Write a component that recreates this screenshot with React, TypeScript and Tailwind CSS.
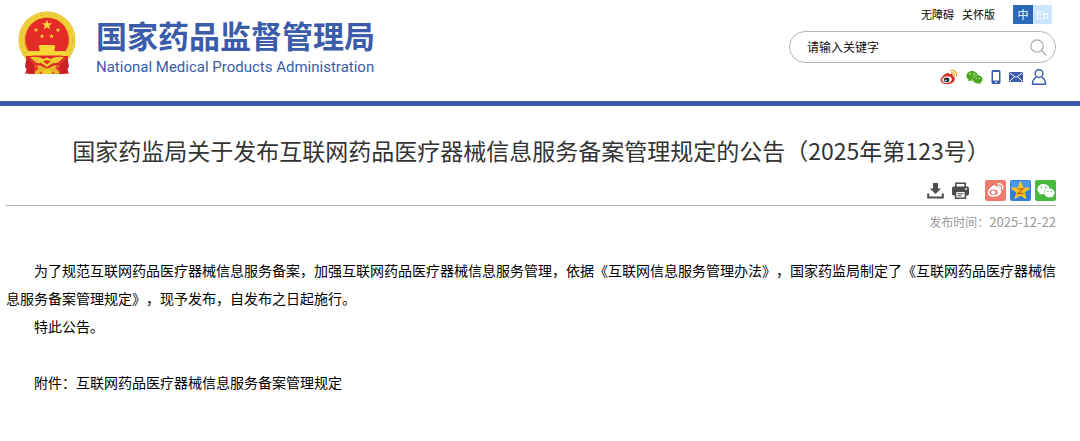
import React from 'react';
import { FaWeixin } from 'react-icons/fa';

const paragraphs = [
  '为了规范互联网药品医疗器械信息服务备案，加强互联网药品医疗器械信息服务管理，依据《互联网信息服务管理办法》，国家药监局制定了《互联网药品医疗器械信息服务备案管理规定》，现予发布，自发布之日起施行。',
  '特此公告。'
];

const star = (cx: number, cy: number, r: number) => Array.from({ length: 10 }, (_, i) => {
  const radius = i % 2 ? r * 0.4 : r;
  const angle = Math.PI * i / 5 - Math.PI / 2;
  return `${cx + radius * Math.cos(angle)},${cy + radius * Math.sin(angle)}`;
}).join(' ');

const Emblem = () => <svg viewBox="0 0 58 64" className="h-16 w-[58px] shrink-0" role="img" aria-label="国徽">
    <circle cx="29" cy="29" r="28.5" fill="#e6bd2c" />
    <circle cx="29" cy="29" r="25.5" fill="none" stroke="#f2d63a" strokeWidth="4" />
    <circle cx="29" cy="29" r="25.5" fill="none" stroke="#dfb42c" strokeWidth="1" strokeDasharray="5 2" />
    <circle cx="29" cy="28.5" r="21.8" fill="#e42b27" />
    <g fill="#f9d835">
      <polygon points={star(29, 14, 5.4)} />
      <polygon points={star(18, 19, 2.5)} />
      <polygon points={star(40, 19, 2.5)} />
      <polygon points={star(24, 25.2, 2.5)} />
      <polygon points={star(33.5, 25.2, 2.5)} />
      <path d="M21.500 34h15l1 2.500h-1V40H47l2 4.500H9l2-4.500h10.500v-3.500h-1z" />
    </g>
    <path d="M8 45h42l-2 18H10z" fill="#dc2927" />
    <path d="M12 46q9-1 13 2l4-1.500 4 1.500q4-3 13-2l-4 4q-3 3-7 2l-6 4-6-4q-4 1-7-2z" fill="#efcb2f" />
    <path d="M25.500 50.500q3.500-2.500 7 0l-3.500 3z" fill="#e42b27" />
    <path d="M16 55q6-2 9 1l4 1.500 4-1.500q3-3 9-1l-5 2.500q5 1 4 5.500h-4l-3-2.500h-10L21 63h-4q-1-4.500 4-5.500z" fill="#e6b92a" />
    <path d="M25 59h8l1.500 4h-11z" fill="#efcb2f" />
    <path d="M9 45l7 8-.5 10-3-1.500L7 63l1.500-4.500L7 55z" fill="#c92026" />
    <path d="M49 45l-7 8 .5 10 3-1.500L51 63l-1.500-4.500L51 55z" fill="#c92026" />
    <path d="M10 47l9 8-1 5M48 47l-9 8 1 5" fill="none" stroke="#ec3b30" strokeWidth="1.500" />
  </svg>;

const WeiboIcon = () => <svg viewBox="0 0 18 16" className="h-4 w-[18px]" aria-hidden="true">
    <path d="M7 4.200c1.300-.6 2.600-.4 2.300 1.300 1.600-.7 4-.6 3.500 1.400 4.100 1.400 2 8.300-5.800 8.300C3.400 15.200.6 13.300.7 11 .8 8.200 4.300 5.200 7 4.200z" fill="#d52b2a" />
    <ellipse cx="7" cy="10.600" rx="4.900" ry="3.300" fill="#fff" transform="rotate(-8 7 10.600)" />
    <ellipse cx="6.600" cy="10.800" rx="2.700" ry="2.300" fill="#222" />
    <circle cx="5.800" cy="11.300" r=".9" fill="#fff" />
    <path d="M11 1.500c3.500-.8 6.500 2 5.500 5.700M11.500 4c1.800-.3 3.200 1 2.700 2.800" fill="none" stroke="#eeaa2d" strokeWidth="1.400" strokeLinecap="round" />
  </svg>;

const PhoneIcon = () => <svg viewBox="0 0 10 14" className="h-3.5 w-2.5" aria-hidden="true">
    <path fillRule="evenodd" d="M2 0h6a1.500 1.500 0 0 1 1.500 1.500v11A1.500 1.500 0 0 1 8 14H2a1.500 1.500 0 0 1-1.500-1.500v-11A1.500 1.500 0 0 1 2 0zm0 2v8.500h6V2zm2.200 9.500v1.200h1.600v-1.200z" fill="#3a5cab" />
  </svg>;

const MailIcon = () => <svg viewBox="0 0 14 10" className="h-2.5 w-3.5" aria-hidden="true">
    <rect width="14" height="10" rx="1" fill="#3a5cab" />
    <path d="M.8 1l6.200 4.500L13.200 1M.8 9.200l4-4M13.200 9.200l-4-4" fill="none" stroke="#fff" strokeWidth="1" />
  </svg>;

const UserIcon = () => <svg viewBox="0 0 16 16" className="size-4" aria-hidden="true">
    <g fill="none" stroke="#3a5cab" strokeWidth="1.400" strokeLinejoin="round">
      <circle cx="8" cy="4.600" r="3.900" />
      <path d="M5.300 8.300C2.800 9.300 1.500 11.500 1.500 15.200h13c0-3.700-1.300-5.900-3.800-6.900" />
    </g>
  </svg>;

const DownloadIcon = () => <svg viewBox="0 0 17 17" className="size-[17px]" aria-hidden="true">
    <path d="M6 1h5v5.500h3.200L8.500 12 2.800 6.500H6z" fill="#4d4d4d" />
    <path d="M1.200 11.500v4h14.600v-4" fill="none" stroke="#4d4d4d" strokeWidth="2" />
  </svg>;

const PrintIcon = () => <svg viewBox="0 0 17 17" className="size-[17px]" aria-hidden="true">
    <path d="M3.800 5V1.200h9.400V5" fill="none" stroke="#4d4d4d" strokeWidth="1.600" />
    <rect y="4.500" width="17" height="9" rx="1.800" fill="#4d4d4d" />
    <circle cx="14" cy="7" r=".9" fill="#fff" />
    <rect x="3.600" y="9.300" width="9.800" height="6.900" fill="#fff" stroke="#4d4d4d" strokeWidth="1.500" />
    <path d="M5.500 11.700h6M5.500 13.800h4" stroke="#4d4d4d" strokeWidth="1.100" />
  </svg>;

const WeiboShareIcon = () => <svg viewBox="0 0 21 21" className="size-[21px]" aria-hidden="true">
    <rect width="21" height="21" rx="2" fill="#ee7b6e" />
    <path d="M8.500 5.500c1.600-.6 2.800-.2 2.500 1.500 1.900-.7 4-.4 3.500 1.700 3.700 1.600 1.600 8.100-5.900 8.100-3.600 0-6-1.700-5.900-4.100.1-2.500 3-6.100 5.800-7.200z" fill="#fff" />
    <ellipse cx="8.600" cy="12.300" rx="4.200" ry="2.900" fill="#ee7b6e" />
    <circle cx="8.200" cy="12.500" r="2.100" fill="#fff" />
    <path d="M13 3.800c3.200-.5 5.400 1.800 4.600 5.200M13.200 6.200c1.600-.2 2.500.9 2.100 2.500" fill="none" stroke="#fff" strokeWidth="1.300" strokeLinecap="round" />
  </svg>;

const QzoneIcon = () => <svg viewBox="0 0 21 21" className="size-[21px]" aria-hidden="true">
    <rect width="21" height="21" rx="2" fill="#2f7fdb" />
    <rect x="1" y="1" width="19" height="10" rx="1" fill="#4a98ea" />
    <polygon points={star(10.5, 11, 8.8)} fill="#fdc624" stroke="#fdc624" strokeWidth="1.500" strokeLinejoin="round" />
    <path d="M7.500 8.800h5.500l-5 4.700h5.500" fill="none" stroke="#c46b16" strokeWidth="1.300" />
  </svg>;

const linkClass = 'flex items-center';

const Header = () => <header className="flex items-start justify-between border-b-5 border-[#3a5cab] pr-6 pl-[18px]">
    <a href="#home" className="flex gap-5 pt-[11px] text-[#3a5cab]">
      <Emblem />
      <div className="pt-0.5">
        <div className="text-[31px] leading-11 font-bold">国家药品监督管理局</div>
        <div className="font-['Roboto',sans-serif] text-[15px] leading-5">National Medical Products Administration</div>
      </div>
    </a>
    <div className="flex h-[101px] w-[267px] flex-col items-end pt-[5px]">
      <nav className="flex h-[19px] items-center gap-2 pr-1 text-[11px] text-black">
        <a href="#accessible">无障碍</a>
        <a href="#care">关怀版</a>
        <div className="ml-2.5 flex text-center leading-[19px] text-white">
          <a href="#zh" className="w-5 bg-[#2a68b8]">中</a>
          <a href="#en" className="w-[19px] bg-[#cce5ff]">En</a>
        </div>
      </nav>
      <form className="mt-[7px] flex h-8 w-full items-center rounded-full border border-[#b5b5b5] pr-2 pl-[17px]">
        <input type="search" aria-label="请输入关键字" placeholder="请输入关键字" className="min-w-0 flex-1 text-xs outline-none placeholder:text-[#111]" />
        <button type="button" aria-label="搜索">
          <svg viewBox="0 0 17 17" className="size-[17px]" fill="none" stroke="#aaa" strokeWidth="1.200">
            <circle cx="7" cy="7" r="6.200" />
            <path d="M11.500 11.500l5 5" />
          </svg>
        </button>
      </form>
      <div className="mt-1.5 flex h-4 items-center gap-2 pr-[9px]">
        <a href="#weibo" aria-label="微博" className={linkClass}><WeiboIcon /></a>
        <a href="#wechat" aria-label="微信" className={linkClass}><FaWeixin className="size-[17px] text-[#4ba71e]" /></a>
        <a href="#mobile" aria-label="手机" className={linkClass}><PhoneIcon /></a>
        <a href="#mail" aria-label="邮箱" className={linkClass}><MailIcon /></a>
        <a href="#user" aria-label="用户" className={linkClass}><UserIcon /></a>
      </div>
    </div>
  </header>;

const App = () => {
  return <div className="bg-white font-['Noto_Sans_CJK_SC',sans-serif] [text-spacing-trim:space-all]" lang="zh-CN">
      <Header />
      <main className="pt-[26px] pr-6 pb-10 pl-1.5">
        <h1 className="text-center text-[23px] leading-9 text-[#333]">
          国家药监局关于发布互联网药品医疗器械信息服务备案管理规定的公告（2025年第123号）
        </h1>
        <div className="mt-3 flex items-center justify-end border-b border-[#b0b0b0] pb-1">
          <button type="button" aria-label="下载" className="mr-2"><DownloadIcon /></button>
          <button type="button" aria-label="打印" className="mr-4"><PrintIcon /></button>
          <div className="flex gap-1">
            <a href="#share-weibo" aria-label="分享到微博"><WeiboShareIcon /></a>
            <a href="#share-qzone" aria-label="分享到QQ空间"><QzoneIcon /></a>
            <a href="#share-wechat" aria-label="分享到微信" className="flex size-[21px] items-center justify-center rounded-xs bg-[#45b83d]">
              <FaWeixin className="size-[18px] text-white" />
            </a>
          </div>
        </div>
        <div className="mt-1.5 text-right text-xs leading-5 text-[#999]">
          发布时间：<time dateTime="2025-12-22" className="text-[13px]">2025-12-22</time>
        </div>
        <article className="mt-6 text-sm leading-7 text-black">
          {paragraphs.map(text => <p key={text} className="indent-7">{text}</p>)}
          <p className="mt-7 indent-7">
            附件：<a href="#attachment">互联网药品医疗器械信息服务备案管理规定</a>
          </p>
        </article>
      </main>
    </div>;
};
export default App;
